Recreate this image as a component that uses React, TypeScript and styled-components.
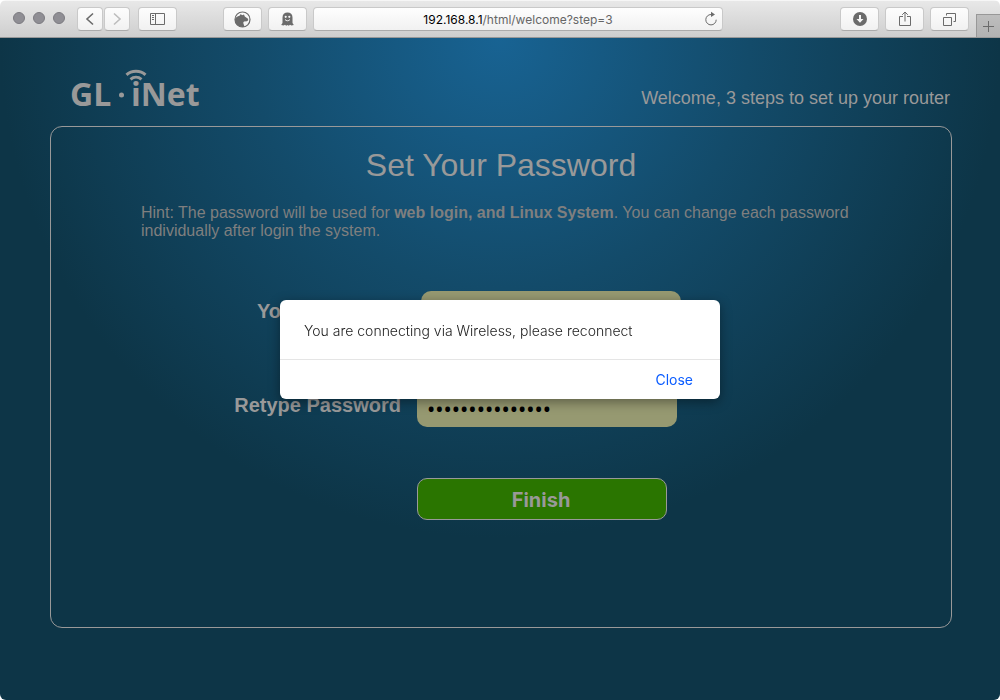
import React from 'react';
import styled, { createGlobalStyle } from 'styled-components';

const sans = '"Liberation Sans", Arial, sans-serif';
const system = 'Inter, "Noto Sans", sans-serif';

const GlobalStyle = createGlobalStyle`
  * { box-sizing: border-box; }
  body { margin: 0; background: #fff; font-family: ${sans}; }
  button, input { font: inherit; margin: 0; }
`;

const Window = styled.div`
  display: flex;
  flex-direction: column;
  min-height: 100vh;
  border-radius: 6px;
  overflow: hidden;
`;

const Toolbar = styled.header`
  display: flex;
  align-items: flex-start;
  height: 38px;
  padding-left: 13px;
  background: linear-gradient(#e8e8e8, #cecece);
  border-top: 1px solid #f6f6f6;
  border-bottom: 1px solid #989898;
`;

const Lights = styled.div`
  display: flex;
  gap: 8px;
  padding: 11px 12px 0 0;
`;

const Light = styled.button`
  width: 12px;
  height: 12px;
  padding: 0;
  border: 1px solid #7c7b81;
  border-radius: 50%;
  background: #8f8e94;
`;

const Group = styled.div<{ $gap?: number; $after?: number }>`
  display: flex;
  gap: ${(p) => p.$gap ?? 0}px;
  margin-right: ${(p) => p.$after ?? 0}px;
  padding-top: 6px;
`;

const ToolButton = styled.button<{ $narrow?: boolean }>`
  display: flex;
  align-items: center;
  justify-content: center;
  width: ${(p) => (p.$narrow ? 26 : 39)}px;
  height: 24px;
  padding: 0;
  border: 1px solid #c9c9c9;
  border-bottom-color: #ababab;
  border-radius: 4px;
  background: linear-gradient(#fdfdfd, #f1f1f1);
`;

const AddressBar = styled.div`
  position: relative;
  flex: 1;
  height: 24px;
  margin: 6px 117px 0 6px;
  border: 1px solid #c9c9c9;
  border-bottom-color: #ababab;
  border-radius: 4px;
  background: linear-gradient(#fefefe, #f1f1f1);
  font: 12px/24px ${system};
  color: #666;
  text-align: center;
`;

const Host = styled.span`
  color: #000;
`;

const Reload = styled.button`
  position: absolute;
  right: 4px;
  top: 3px;
  display: flex;
  padding: 0;
  border: 0;
  background: none;
`;

const NewTab = styled.button`
  display: flex;
  align-items: center;
  justify-content: center;
  width: 24px;
  height: 23px;
  margin-top: 13px;
  padding: 0;
  border: 1px solid #989898;
  border-width: 1px 0 0 1px;
  background: linear-gradient(#bebebe, #b2b2b2);
`;

const Page = styled.main`
  flex: 1;
  padding-bottom: 72px;
  background: radial-gradient(circle 500px at 50% 0, #186393, #134b6a 50%, #0d3547);
  color: #999;
`;

const Banner = styled.div`
  display: flex;
  justify-content: space-between;
  align-items: flex-end;
  height: 88px;
  padding: 0 50px 0 64px;
`;

const Welcome = styled.p`
  margin: 0 0 18px;
  font-size: 18px;
  line-height: 20px;
`;

const Logo = styled.svg`
  display: block;
  margin-bottom: 10px;
  overflow: visible;
  font: 700 32px "Open Sans", "Noto Sans", sans-serif;
  fill: #999;
`;

const Card = styled.section`
  min-height: 502px;
  margin: 0 48px 0 50px;
  padding: 18px 90px;
  border: 1px solid #999;
  border-radius: 12px;
`;

const Title = styled.h1`
  margin: 0;
  font-size: 32px;
  font-weight: 400;
  line-height: 40px;
  text-align: center;
`;

const Hint = styled.p`
  margin: 19px 0 51px;
  font-size: 16px;
  line-height: 18px;
  color: #7f7f7f;
`;

const Form = styled.form`
  display: grid;
  grid-template-columns: 260px 260px;
  column-gap: 16px;
  row-gap: 52px;
`;

const Label = styled.label`
  font-size: 20px;
  font-weight: 700;
  line-height: 40px;
  text-align: right;
`;

const Password = styled.input<{ $inset?: boolean }>`
  width: 260px;
  height: 42px;
  margin-left: ${(p) => (p.$inset ? 4 : 0)}px;
  padding: 4px 10px 0;
  border: 0;
  border-radius: 10px;
  outline: 0;
  background: #969971;
  color: #000;
  font: 22px "Noto Sans", sans-serif;
`;

const Finish = styled.button`
  grid-column: 2;
  width: 250px;
  height: 42px;
  margin-top: -1px;
  padding: 2px 8px 0 6px;
  border: 1px solid #999;
  border-radius: 10px;
  background: #2a7500;
  color: #999;
  font: 700 20px ${system};
`;

const Overlay = styled.div`
  position: fixed;
  inset: 0;
  display: flex;
  align-items: center;
  justify-content: center;
  padding-bottom: 1px;
`;

const Dialog = styled.div`
  width: 440px;
  border-radius: 6px;
  background: #fff;
  box-shadow: 0 3px 12px rgba(0, 0, 0, 0.4);
  font-family: ${system};
  font-size: 14px;
`;

const Message = styled.p`
  margin: 0;
  padding: 21px 24px 18px;
  font-weight: 300;
  line-height: 20px;
  color: #222;
`;

const Actions = styled.div`
  display: flex;
  justify-content: flex-end;
  padding: 10px 27px 9px;
  border-top: 1px solid #e5e5e5;
`;

const Close = styled.button`
  padding: 0;
  border: 0;
  background: none;
  color: #0a5cff;
  line-height: 20px;
`;

const Icon = styled.svg`
  display: block;
  fill: none;
  stroke: #6b6b6b;
  stroke-width: 1;
`;

const BrowserToolbar = () => (
  <Toolbar>
    <Lights>
      <Light aria-label="Close window" />
      <Light aria-label="Minimize" />
      <Light aria-label="Zoom" />
    </Lights>
    <Group $gap={1} $after={8}>
      <ToolButton $narrow aria-label="Back">
        <Icon width="10" height="14"><path d="M8 1.5 2 7l6 5.5" strokeWidth="1.6" /></Icon>
      </ToolButton>
      <ToolButton $narrow aria-label="Forward">
        <Icon width="10" height="14"><path d="m2 1.5 6 5.5-6 5.5" stroke="#bdbdbd" strokeWidth="1.6" /></Icon>
      </ToolButton>
    </Group>
    <Group $after={46}>
      <ToolButton aria-label="Show sidebar">
        <Icon width="15" height="12"><path d="M.5.5h14v11H.5zM5.5.5v11M2 2.5h2M2 4.5h2M2 6.5h2" /></Icon>
      </ToolButton>
    </Group>
    <Group $gap={6}>
      <ToolButton aria-label="Shield extension">
        <Icon width="17" height="17">
          <circle cx="8.5" cy="8.5" r="7.5" strokeWidth="1.2" />
          <path d="M1 8.500C1.500 6.500 3.500 5.200 5.500 4.800L6.800 3l1.200 1.200L10 3.500l.8 2 3.200 2.300.2 1.500-1.200 1-3 .2-.8 1.200 1.300 4C6 17 1 14 1 8.500z" fill="#6b6b6b" stroke="none" />
        </Icon>
      </ToolButton>
      <ToolButton aria-label="Ghost extension">
        <Icon width="13" height="14">
          <path d="M1.500 11V5.500C1.500 2.200 3.500.5 6.500.5s5 1.700 5 5V11l1.300 2-2.300.5-1.500-.8-1.200 1.100-1.300-.9-1.300.9L4 12.700l-1.500.8L.2 13z" fill="#6b6b6b" stroke="none" />
          <circle cx="4.700" cy="4.800" r="1.100" fill="#f7f7f7" stroke="none" />
          <circle cx="8.300" cy="4.800" r="1.100" fill="#f7f7f7" stroke="none" />
          <path d="M4 7.500c1.300 1.700 3.700 1.700 5 0" stroke="#f7f7f7" />
        </Icon>
      </ToolButton>
    </Group>
    <AddressBar>
      <Host>192.168.8.1</Host>/html/welcome?step=3
      <Reload aria-label="Reload">
        <Icon width="14" height="16">
          <path d="M7.500 3.500H7a5.200 5.200 0 1 0 5.200 5.200" />
          <path d="M7 .8 11 3.500 7 6z" fill="#6b6b6b" stroke="none" />
        </Icon>
      </Reload>
    </AddressBar>
    <Group $gap={6} $after={7}>
      <ToolButton aria-label="Downloads">
        <Icon width="14" height="14">
          <circle cx="7" cy="7" r="7" fill="#6b6b6b" stroke="none" />
          <path d="M6 3h2v4h2.500L7 10.800 3.500 7H6z" fill="#f7f7f7" stroke="none" />
        </Icon>
      </ToolButton>
      <ToolButton aria-label="Share">
        <Icon width="12" height="16"><path d="M4 5.500H.5v9h11v-9H8M6 10.500V1M3.200 3.800 6 1l2.800 2.800" /></Icon>
      </ToolButton>
      <ToolButton aria-label="Show tabs">
        <Icon width="13" height="13"><path d="M.5 4.500h8v8h-8zM3.500 2.500v-2h9v8h-2" /></Icon>
      </ToolButton>
    </Group>
    <NewTab aria-label="New tab">
      <Icon width="11" height="11"><path d="M5.500 0v11M0 5.500h11" /></Icon>
    </NewTab>
  </Toolbar>
);

const BrandLogo = () => (
  <Logo width="140" height="48" role="img" aria-label="GL iNet">
    <text x="6" y="38">GL</text>
    <circle cx="57.5" cy="27" r="2.500" />
    <text x="67" y="38">iNet</text>
    <path d="M62.500 6.800c5-4.600 14-4.600 19 0M66.500 11.300c3.200-2.600 7.800-2.600 11 0" fill="none" stroke="#999" strokeWidth="3" />
  </Logo>
);

export default function App() {
  return (
    <Window>
      <GlobalStyle />
      <BrowserToolbar />
      <Page>
        <Banner>
          <BrandLogo />
          <Welcome>Welcome, 3 steps to set up your router</Welcome>
        </Banner>
        <Card>
          <Title>Set Your Password</Title>
          <Hint>
            Hint: The password will be used for <strong>web login, and Linux System</strong>. You can
            change each password individually after login the system.
          </Hint>
          <Form onSubmit={(e) => e.preventDefault()}>
            <Label htmlFor="password">Your Password</Label>
            <Password id="password" type="password" defaultValue="goodlife-router" $inset />
            <Label htmlFor="retype">Retype Password</Label>
            <Password id="retype" type="password" defaultValue="goodlife-router" />
            <Finish type="submit">Finish</Finish>
          </Form>
        </Card>
      </Page>
      <Overlay>
        <Dialog role="dialog" aria-modal="true" aria-describedby="message">
          <Message id="message">You are connecting via Wireless, please reconnect</Message>
          <Actions>
            <Close type="button">Close</Close>
          </Actions>
        </Dialog>
      </Overlay>
    </Window>
  );
}
